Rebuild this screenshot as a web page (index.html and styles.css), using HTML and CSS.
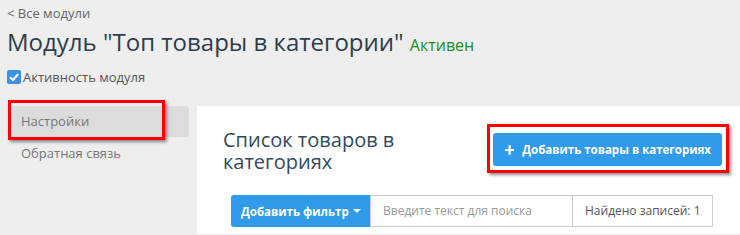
FILE: index.html
```html
<!DOCTYPE html>
<html lang="ru">
<head>
<meta charset="utf-8">
<link rel="stylesheet" href="styles.css">
</head>
<body>
<header class="top">
  <a class="back" href="#">&lt; Все модули</a>
  <h1 class="title">Модуль "Топ товары в категории" <span class="status">Активен</span></h1>
  <label class="active-row"><span class="cb"><svg viewBox="0 0 14 14" width="14" height="14"><rect width="14" height="14" rx="2" fill="#3d8fe0"/><path d="M3 7.2 L6 10 L11.2 4" stroke="#fff" stroke-width="2.2" fill="none"/></svg></span>Активность модуля</label>
</header>
<div class="main">
  <nav class="side">
    <div class="nav-item active">Настройки</div>
    <div class="nav-item">Обратная связь</div>
    <div class="mark mark-nav"></div>
  </nav>
  <section class="panel">
    <div class="panel-head">
      <h2 class="panel-title">Список товаров в категориях</h2>
      <div class="btn-wrap">
        <button class="btn-add"><svg viewBox="0 0 10 10" width="10" height="10"><path d="M5 0 V10 M0 5 H10" stroke="#fff" stroke-width="2.4"/></svg><span>Добавить товары в категориях</span></button>
        <div class="mark mark-btn"></div>
      </div>
    </div>
    <div class="filter">
      <button class="btn-filter"><span>Добавить фильтр</span><span class="caret"></span></button>
      <div class="search">Введите текст для поиска</div>
      <div class="count">Найдено записей: 1</div>
    </div>
  </section>
</div>
</body>
</html>
```
FILE: styles.css
```css
html, body { margin: 0; padding: 0; }
body {
  background: #eeeeee;
  font-family: "Open Sans", "Noto Sans", sans-serif;
  width: 740px;
  height: 235px;
  overflow: hidden;
}
.top { padding: 4px 7px 0; }
.back {
  display: block;
  font-size: 13px;
  line-height: 18px;
  color: #666;
  text-decoration: none;
}
.title {
  margin: 4px 0 0;
  font-size: 24px;
  font-weight: 400;
  line-height: 32px;
  color: #2e3d4c;
}
.status { font-size: 16px; color: #1e8c1e; }
.active-row {
  display: flex;
  align-items: center;
  gap: 2px;
  margin-top: 4px;
  font-size: 13px;
  line-height: 24px;
  color: #555;
}
.cb { display: flex; }
.main {
  display: flex;
  gap: 8px;
  margin-top: 17px;
}
.side {
  position: relative;
  width: 181px;
  padding-left: 8px;
  flex: none;
}
.nav-item {
  height: 32px;
  line-height: 32px;
  padding-left: 13px;
  font-size: 13px;
  color: #777;
  border-radius: 4px;
}
.nav-item.active { background: #dcdcdc; height: 31px; line-height: 30px; }
.mark {
  position: absolute;
  border: 3px solid #ff0000;
  box-shadow: 2px 2px 3px rgba(0,0,0,0.45);
  pointer-events: none;
}
.mark-nav { left: 8px; top: -6px; width: 151px; height: 34px; }
.panel {
  flex: 1;
  background: #fff;
  height: 128px;
  box-sizing: border-box;
  padding: 23px 18px 0 26px;
}
.panel-head {
  display: flex;
  justify-content: space-between;
  align-items: flex-start;
}
.panel-title {
  margin: 0;
  width: 200px;
  font-size: 20px;
  font-weight: 400;
  line-height: 22px;
  color: #34495e;
}
.btn-wrap { position: relative; margin-top: 4px; }
.btn-add {
  display: flex;
  align-items: center;
  gap: 8px;
  height: 33px;
  padding: 0 11px 0 12px;
  background: #2f9bea;
  border: none;
  border-radius: 3px;
  color: #fff;
  font-family: "Open Sans", "Noto Sans", sans-serif;
  font-size: 11.5px;
  font-weight: 700;
  white-space: nowrap;
  width: 229px;
  box-sizing: border-box;
}
.mark-btn { left: -6px; top: -9px; right: -7px; bottom: -7px; }
.filter {
  display: flex;
  margin: 22px 0 0 8px;
  height: 32px;
}
.btn-filter {
  display: flex;
  align-items: center;
  gap: 4px;
  width: 139px;
  box-sizing: border-box;
  padding: 0 10px;
  background: #2f9bea;
  border: none;
  border-radius: 3px 0 0 3px;
  color: #fff;
  font-family: "Open Sans", "Noto Sans", sans-serif;
  font-size: 11.5px;
  font-weight: 700;
  white-space: nowrap;
}
.caret {
  width: 0; height: 0;
  border-left: 4px solid transparent;
  border-right: 4px solid transparent;
  border-top: 4px solid #fff;
}
.search {
  width: 202px;
  border: 1px solid #ccc;
  border-right: none;
  padding-left: 12px;
  box-sizing: border-box;
  line-height: 30px;
  font-size: 12px;
  color: #999;
}
.count {
  width: 141px;
  box-sizing: border-box;
  border: 1px solid #ccc;
  padding-left: 12px;
  line-height: 30px;
  font-size: 12px;
  color: #555;
}
```
